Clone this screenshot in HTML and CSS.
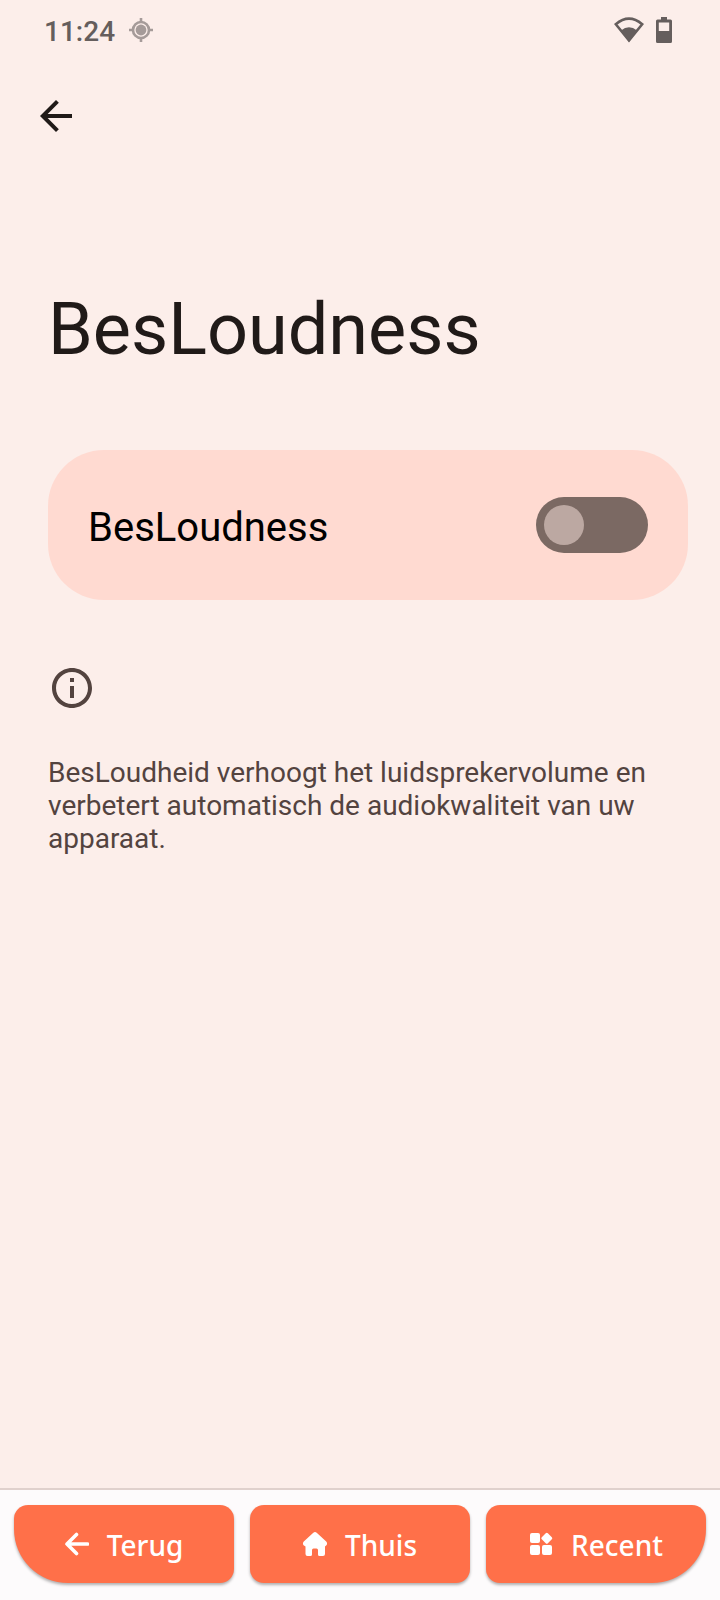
FILE: index.html
```html
<!DOCTYPE html>
<html lang="nl">
<head>
  <meta charset="UTF-8">
  <meta name="viewport" content="width=device-width, initial-scale=1.0">
  <title>BesLoudness</title>
  <link rel="stylesheet" href="styles.css">
</head>
<body>
  <div class="status-bar">
    <span class="time">11:24</span>
    <svg class="location" width="24" height="24" viewBox="0 0 24 24">
      <circle cx="12" cy="12" r="5.4" fill="currentColor"/>
      <circle cx="12" cy="12" r="8" fill="none" stroke="currentColor" stroke-width="2.6"/>
      <path d="M12 0v4M12 20v4M0 12h4M20 12h4" stroke="currentColor" stroke-width="2.6"/>
    </svg>
    <svg class="wifi" width="30" height="26" viewBox="0 0 30 26">
      <path d="M1.800 7.200Q15-3.800 28.200 7.200L15 23.400z" fill="none" stroke="currentColor" stroke-width="2.6"/>
      <path d="M7 13.500Q15 7.200 23 13.500L15 25z" fill="currentColor"/>
    </svg>
    <svg width="16" height="26" viewBox="0 0 16 26">
      <path fill="currentColor" fill-rule="evenodd" d="M5 0h6v2.600h3.500q1.500 0 1.500 1.500V24.500q0 1.500-1.500 1.500h-13Q0 26 0 24.500V4.100q0-1.500 1.500-1.500H5zM2.800 5.400V14h10.400V5.400z"/>
    </svg>
  </div>

  <header>
    <button class="back" type="button" aria-label="Terug">
      <svg width="48" height="48" viewBox="0 0 24 24">
        <path fill="currentColor" d="M20 11H7.830l5.590-5.590L12 4l-8 8 8 8 1.410-1.410L7.830 13H20v-2z"/>
      </svg>
    </button>
    <h1>BesLoudness</h1>
  </header>

  <main>
    <div class="card">
      <label for="loudness">BesLoudness</label>
      <input class="switch" type="checkbox" role="switch" id="loudness">
    </div>
    <svg class="info" width="48" height="48" viewBox="0 0 24 24">
      <path fill="currentColor" d="M11 7h2v2h-2zm0 4h2v6h-2zm1-9C6.480 2 2 6.480 2 12s4.480 10 10 10 10-4.480 10-10S17.520 2 12 2zm0 18c-4.410 0-8-3.590-8-8s3.590-8 8-8 8 3.590 8 8-3.590 8-8 8z"/>
    </svg>
    <p>BesLoudheid verhoogt het luidsprekervolume en verbetert automatisch de audiokwaliteit van uw apparaat.</p>
  </main>

  <nav>
    <button type="button">
      <svg width="24" height="24" viewBox="0 0 24 24">
        <path d="M11.500 2.500L2 12L11.500 21.500M2 12H22.500" fill="none" stroke="currentColor" stroke-width="3.600" stroke-linecap="round" stroke-linejoin="round"/>
      </svg>
      <span>Terug</span>
    </button>
    <button type="button">
      <svg width="24" height="24" viewBox="0 0 24 24">
        <path fill="currentColor" d="M10.300.700Q12-.700 13.700.700L23.200 9.500Q24.800 11.300 23.400 13.200L22 14.500V22q0 2-2 2h-3.500q-1.500 0-1.500-1.500V18q0-1.500-1.500-1.500h-3Q9 16.500 9 18v4.500Q9 24 7.500 24H4.500q-2 0-2-2V14.500L.600 13.200Q-.800 11.300.800 9.500z"/>
      </svg>
      <span>Thuis</span>
    </button>
    <button type="button">
      <svg width="24" height="24" viewBox="0 0 24 24">
        <g fill="currentColor">
          <rect x="1" y="1" width="10" height="10" rx="2"/>
          <rect x="1" y="13" width="10" height="10" rx="2"/>
          <rect x="13" y="13" width="10" height="10" rx="2"/>
          <rect x="13.500" y="2" width="8.600" height="8.600" rx="1.500" transform="rotate(45 17.800 6.300)"/>
        </g>
      </svg>
      <span>Recent</span>
    </button>
  </nav>
</body>
</html>
```

FILE: styles.css
```css
* {
  margin: 0;
  padding: 0;
  box-sizing: border-box;
}
body {
  display: flex;
  flex-direction: column;
  min-height: 100vh;
  background-color: #fceeea;
  color: #201a18;
  font-family: Roboto, sans-serif;
}
svg {
  display: block;
  flex-shrink: 0;
}
button {
  border: none;
  font: inherit;
  cursor: pointer;
}
.status-bar {
  display: flex;
  align-items: center;
  height: 60px;
  padding: 0 48px 0 44px;
  color: #655e5d;
}
.time {
  padding-top: 4px;
  font-size: 28px;
  font-weight: 500;
  line-height: 32px;
}
.location {
  margin-left: 14px;
  color: #a59b99;
}
.wifi {
  margin: 0 12px 0 auto;
}
header {
  padding: 32px 48px 0 32px;
}
.back {
  display: block;
  background: none;
  color: #201a18;
}
h1 {
  padding: 148px 0 0 16px;
  font-size: 72px;
  font-weight: 400;
  line-height: 84px;
}
main {
  flex: 1;
  padding: 78px 32px 48px 48px;
}
.card {
  display: flex;
  align-items: center;
  justify-content: space-between;
  min-height: 150px;
  padding: 40px;
  border-radius: 56px;
  background-color: #ffdad1;
}
.card label {
  padding-top: 6px;
  color: #000;
  font-size: 40px;
  line-height: 48px;
}
.switch {
  appearance: none;
  width: 112px;
  height: 56px;
  padding: 8px;
  border-radius: 28px;
  background-color: #7b6963;
  cursor: pointer;
}
.switch::before {
  content: "";
  display: block;
  width: 40px;
  height: 40px;
  border-radius: 50%;
  background-color: #bca8a2;
}
.switch:checked::before {
  margin-left: auto;
}
.info {
  margin: 64px 0 44px;
  color: #53433f;
}
p {
  color: #53433f;
  font-size: 28px;
  line-height: 33px;
}
nav {
  display: flex;
  gap: 16px;
  padding: 15px 14px 17px;
  border-top: 2px solid #e0d1cd;
  background-color: #fdfbfc;
}
nav button {
  display: flex;
  flex: 1;
  align-items: center;
  justify-content: center;
  gap: 18px;
  height: 78px;
  border-radius: 14px;
  background-color: #ff7049;
  box-shadow: 0 2px 3px rgba(0, 0, 0, 0.3);
  color: #fff;
  font-family: "Noto Sans", sans-serif;
  font-size: 28px;
  font-weight: 500;
}
nav span {
  padding-top: 2px;
}
nav button:first-child {
  border-bottom-left-radius: 54px;
}
nav button:last-child {
  border-bottom-right-radius: 54px;
}
```
